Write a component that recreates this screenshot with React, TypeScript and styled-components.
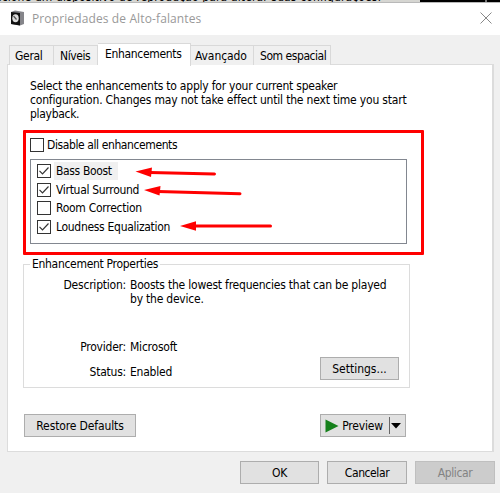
import React from "react";
import styled, { createGlobalStyle } from "styled-components";

const Global = createGlobalStyle`
  * { box-sizing: border-box; }
  body { margin: 0; background: #f0f0f0; overflow: hidden; }
`;

const Screen = styled.div`
  position: relative;
  width: 500px;
  height: 493px;
  overflow: hidden;
  display: flex;
  flex-direction: column;
  background: #f0f0f0;
  color: #000;
  font: 12px/14px "DejaVu Sans Condensed", "Open Sans", sans-serif;
  white-space: nowrap;
`;

const Backdrop = styled.div`
  height: 3px;
  flex: none;
  display: flex;
  justify-content: space-between;
  overflow: hidden;
  background: #d6d6d2;
  border-bottom: 1px solid #b9b9b9;
`;

const BackdropText = styled.span`
  margin-top: -10px;
  margin-left: -22px;
  font-size: 12px;
  line-height: 14px;
  letter-spacing: 0.13px;
`;

const BackdropDark = styled.span`
  width: 80px;
  height: 3px;
  background: linear-gradient(90deg, #000 65px, #777 65px, #777 67px, #000 67px);
`;

const TitleBar = styled.header`
  height: 32px;
  flex: none;
  display: flex;
  align-items: center;
  padding: 0 8px 2px 10px;
  background: #fff;
`;

const Title = styled.h1`
  flex: 1;
  margin: 2px 0 0 7px;
  font: 400 12px/16px "Open Sans", sans-serif;
  letter-spacing: 0.12px;
  color: #999;
`;

const T = styled.span<{ $ls?: number }>`
  letter-spacing: ${(p) => p.$ls ?? 0}px;
`;

const Tabs = styled.nav`
  display: flex;
  align-items: flex-end;
  height: 30px;
  flex: none;
  padding-left: 9px;
  position: relative;
`;

const Tab = styled.div<{ $w: number; $pad: number; $active?: boolean }>`
  width: ${(p) => p.$w}px;
  height: ${(p) => (p.$active ? 23 : 20)}px;
  margin-bottom: ${(p) => (p.$active ? -1 : 0)}px;
  padding-bottom: ${(p) => (p.$active ? 2 : 0)}px;
  padding-left: ${(p) => p.$pad}px;
  display: flex;
  align-items: center;
  background: ${(p) => (p.$active ? "#fff" : "#f0f0f0")};
  border: 1px solid #d9d9d9;
  border-bottom: 0;
  & + & { border-left-width: ${(p) => (p.$active ? 1 : 0)}px; }
`;

const Panel = styled.main`
  height: 388px;
  margin: -1px 6px 0 7px;
  flex: none;
  padding: 14px 0 0 16px;
  background: #fff;
  border: 1px solid #dcdcdc;
  border-right-width: 2px;
`;

const Intro = styled.p`
  height: 51px;
  margin: 0 0 0 6px;
  display: flex;
  flex-direction: column;
`;

const Highlight = styled.section`
  width: 401px;
  height: 125px;
  margin-left: -1px;
  padding: 3px 0 0 4px;
  border: 3px solid #f00;
  border-radius: 1px;
`;

const CheckRow = styled.label`
  height: 18.5px;
  display: flex;
  align-items: center;
`;

const Box = styled.span`
  width: 14px;
  height: 14px;
  flex: none;
  border: 1px solid #333;
  background: #fff;
  display: flex;
`;

const Label = styled.span<{ $ls: number; $selected?: boolean; $tight?: boolean }>`
  height: 18px;
  padding: 2px 6px 2px 2px;
  margin-left: ${(p) => (p.$tight ? 1 : 3)}px;
  letter-spacing: ${(p) => p.$ls}px;
  background: ${(p) => (p.$selected ? "#f0f0f0" : "transparent")};
`;

const List = styled.div`
  width: 377px;
  height: 85px;
  margin-top: 4px;
  padding: 2.5px 0 0 6px;
  border: 1px solid #828790;
`;

const Group = styled.fieldset`
  width: 387px;
  height: 131px;
  margin: 2px 0 0 -1px;
  padding: 7px 10px 0 0;
  border: 1px solid #dcdcdc;
  min-width: 0;
`;

const Legend = styled.legend`
  margin-left: 6px;
  padding: 0 2px;
`;

const Field = styled.div<{ $h: number }>`
  height: ${(p) => p.$h}px;
  display: grid;
  grid-template-columns: 102px 1fr;
  column-gap: 4px;
  letter-spacing: -0.22px;
`;

const Name = styled.span`
  text-align: right;
`;

const Value = styled.span`
  display: flex;
  flex-direction: column;
`;

const Button = styled.button<{ $w: number }>`
  width: ${(p) => p.$w}px;
  height: 23px;
  flex: none;
  padding: 0;
  display: flex;
  align-items: center;
  justify-content: center;
  font: inherit;
  color: #000;
  background: #e1e1e1;
  border: 1px solid #adadad;
  &:disabled { background: #ccc; border-color: #bfbfbf; color: #838383; }
`;

const PreviewText = styled.span`
  margin: 0 0 0 3px;
  letter-spacing: -0.2px;
`;

const SettingsRow = styled.div`
  display: flex;
  justify-content: flex-end;
  margin-top: -22px;
`;

const ActionRow = styled.div`
  width: 382px;
  margin-top: 26px;
  display: flex;
  justify-content: space-between;
`;

const Footer = styled.footer`
  display: flex;
  justify-content: flex-end;
  gap: 8px;
  padding: 9px 5px 0 0;
`;

const Overlay = styled.svg`
  position: absolute;
  left: 0;
  top: 0;
  pointer-events: none;
`;

const Check = ({ on }: { on?: boolean }) => (
  <Box>
    {on && (
      <svg width="12" height="12" viewBox="0 0 12 12" fill="none" stroke="#333" strokeWidth="1.2">
        <path d="M1.500 5.800 4.500 8.800 10.500 2.500" />
      </svg>
    )}
  </Box>
);

const options = [
  { text: "Bass Boost", on: true, selected: true, ls: -0.35 },
  { text: "Virtual Surround", on: true, ls: -0.3 },
  { text: "Room Correction", on: false, ls: -0.27 },
  { text: "Loudness Equalization", on: true, ls: -0.3 },
];

export default function App() {
  return (
    <Screen>
      <Global />
      <Backdrop>
        <BackdropText>Selecione um dispositivo de reprodução para alterar suas configurações:</BackdropText>
        <BackdropDark />
      </Backdrop>
      <TitleBar>
        <svg width="15" height="17" viewBox="0 0 15 17">
          <path d="M1 2 5 0.5 14 2V14L10 15.5 1 14Z" fill="#85858a" />
          <path d="M1 2 10 3V15.5L1 14Z" fill="#111" />
          <ellipse cx="5.500" cy="8.300" rx="3.200" ry="4" fill="#ddd" />
          <path d="M3.500 6 6.500 9.500" stroke="#555" strokeWidth="1.2" />
        </svg>
        <Title>Propriedades de Alto-falantes</Title>
        <svg width="12" height="12" viewBox="0 0 12 12" stroke="#888" strokeWidth="1">
          <path d="M.5 .5 11.5 11.5M11.5 .5 .5 11.5" />
        </svg>
      </TitleBar>
      <Tabs>
        <Tab $w={45} $pad={5}><T $ls={-0.3}>Geral</T></Tab>
        <Tab $w={44} $pad={6}><T $ls={-0.4}>Níveis</T></Tab>
        <Tab $w={93} $pad={7} $active><T $ls={-0.33}>Enhancements</T></Tab>
        <Tab $w={63} $pad={4}><T $ls={-0.1}>Avançado</T></Tab>
        <Tab $w={77} $pad={6}><T $ls={-0.45}>Som espacial</T></Tab>
      </Tabs>
      <Panel>
        <Intro>
          <T $ls={-0.22}>Select the enhancements to apply for your current speaker</T>
          <T $ls={-0.19}>configuration. Changes may not take effect until the next time you start</T>
          <T $ls={-0.3}>playback.</T>
        </Intro>
        <Highlight>
          <CheckRow><Check /><Label $ls={-0.4} $tight>Disable all enhancements</Label></CheckRow>
          <List>
            {options.map((o) => (
              <CheckRow key={o.text}>
                <Check on={o.on} />
                <Label $ls={o.ls} $selected={o.selected}>{o.text}</Label>
              </CheckRow>
            ))}
          </List>
        </Highlight>
        <Group>
          <Legend><T $ls={-0.3}>Enhancement Properties</T></Legend>
          <Field $h={62}>
            <Name>Description:</Name>
            <Value><span>Boosts the lowest frequencies that can be played</span><span>by the device.</span></Value>
          </Field>
          <Field $h={25}><Name>Provider:</Name><Value>Microsoft</Value></Field>
          <Field $h={14}><Name>Status:</Name><Value>Enabled</Value></Field>
          <SettingsRow><Button $w={79}>Settings...</Button></SettingsRow>
        </Group>
        <ActionRow>
          <Button $w={112}><T $ls={-0.12}>Restore Defaults</T></Button>
          <Button $w={86}>
            <svg width="14" height="14" viewBox="0 0 14 14"><path d="M.5 .5 13.500 7 .5 13.500Z" fill="#15801b" /></svg>
            <PreviewText>Preview</PreviewText>
            <svg width="18" height="17" viewBox="0 0 18 17"><path d="M6.500 0V17" stroke="#666" /><path d="M8 6H18L13 11.500Z" /></svg>
          </Button>
        </ActionRow>
      </Panel>
      <Footer>
        <Button $w={79}><T $ls={-0.3}>OK</T></Button>
        <Button $w={80}><T $ls={-0.4}>Cancelar</T></Button>
        <Button $w={80} disabled><T $ls={-0.4}>Aplicar</T></Button>
      </Footer>
      <Overlay width="500" height="493" fill="#f00" stroke="#f00">
        <path d="M150 172.500 214.500 174" strokeWidth="3" strokeLinecap="round" />
        <path d="M135.500 171.500 152 167.500 151 177Z" stroke="none" />
        <path d="M158 191.500 240 193.700" strokeWidth="3" strokeLinecap="round" />
        <path d="M144 190 160.500 186 159.500 195.500Z" stroke="none" />
        <path d="M194 226H270.500" strokeWidth="3" strokeLinecap="round" />
        <path d="M180 226 196 221.200V230.800Z" stroke="none" />
      </Overlay>
    </Screen>
  );
}
